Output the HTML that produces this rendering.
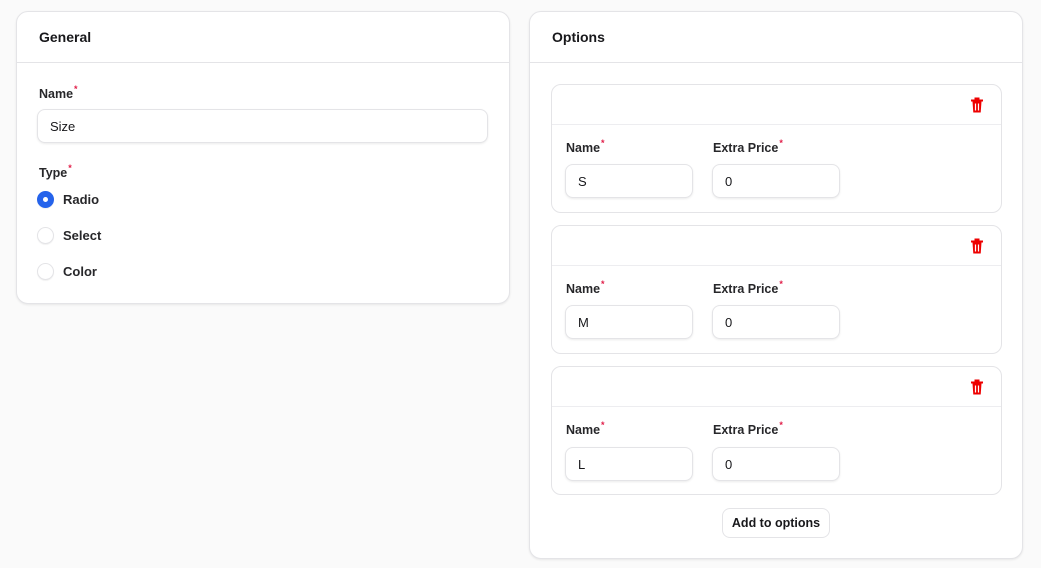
<!DOCTYPE html>
<html><head><meta charset="utf-8"><style>
*{box-sizing:border-box;margin:0;padding:0}
body{width:1041px;height:568px;background:#fafafa;font-family:"Liberation Sans",sans-serif;color:#18181b;position:relative;overflow:hidden}
.card{position:absolute;background:#fff;border:1px solid #e4e4e7;border-radius:12px;box-shadow:0 1px 2px rgba(0,0,0,.08)}
.hd{position:absolute;left:0;right:0;top:0;height:51px;border-bottom:1px solid #e4e4e7}
.ht{position:absolute;left:22px;top:17px;font-size:14px;font-weight:bold}
.lbl{position:absolute;font-size:12.5px;font-weight:bold;color:#27272a}
.lbl sup{color:#e11d48;font-size:9px;position:relative;top:-1px;margin-left:1px}
.inp{position:absolute;height:34px;border:1px solid #e4e4e7;border-radius:8px;box-shadow:0 1px 2px rgba(0,0,0,.08);font-size:13px;padding:9px 12px;background:#fff}
.rad{position:absolute;width:17px;height:17px;border-radius:50%;border:1px solid #e4e4e7;box-shadow:0 1px 1px rgba(0,0,0,.06);background:#fff}
.rad.on{background:#2563eb;border-color:#2563eb}
.rad.on:after{content:"";position:absolute;left:5px;top:5px;width:5px;height:5px;border-radius:50%;background:#fff}
.rt{position:absolute;font-size:13px;font-weight:bold;color:#27272a}
.opt{position:absolute;left:21px;width:451px;height:129px;border:1px solid #e4e4e7;border-radius:10px;background:#fff}
.opt .oh{position:absolute;left:0;right:0;top:0;height:40px;border-bottom:1px solid #ededf0}
.opt svg{position:absolute;left:418px;top:12px}
.btn{position:absolute;left:192px;top:496px;width:108px;height:30px;border:1px solid #e4e4e7;border-radius:8px;font-size:12.5px;font-weight:bold;text-align:center;line-height:28px;background:#fff}
</style></head><body>
<div class="card" style="left:16px;top:11px;width:494px;height:293px">
  <div class="hd"><div class="ht">General</div></div>
  <div class="lbl" style="left:22px;top:73px">Name<sup>*</sup></div>
  <div class="inp" style="left:20px;top:97px;width:451px">Size</div>
  <div class="lbl" style="left:22px;top:152px">Type<sup>*</sup></div>
  <div class="rad on" style="left:20px;top:179px"></div><div class="rt" style="left:46px;top:180px">Radio</div>
  <div class="rad" style="left:20px;top:215px"></div><div class="rt" style="left:46px;top:216px">Select</div>
  <div class="rad" style="left:20px;top:251px"></div><div class="rt" style="left:46px;top:252px">Color</div>
</div>
<div class="card" style="left:529px;top:11px;width:494px;height:548px">
  <div class="hd"><div class="ht">Options</div></div>
  <div class="opt" style="top:72px"><div class="oh"></div>
    <svg width="14" height="17" viewBox="0 0 14 17"><path d="M4.5 1.5h5M1 3.5h12" stroke="#e00" stroke-width="2" fill="none"/><path d="M2.5 4.5h9l-.8 11h-7.4z" fill="#e00"/><path d="M5.5 6.5v7M8.5 6.5v7" stroke="#fff" stroke-width="1.2"/></svg>
    <div class="lbl" style="left:14px;top:54px">Name<sup>*</sup></div>
    <div class="lbl" style="left:161px;top:54px">Extra Price<sup>*</sup></div>
    <div class="inp" style="left:13px;top:79px;width:128px">S</div>
    <div class="inp" style="left:160px;top:79px;width:128px">0</div>
  </div>
  <div class="opt" style="top:213px"><div class="oh"></div>
    <svg width="14" height="17" viewBox="0 0 14 17"><path d="M4.5 1.5h5M1 3.5h12" stroke="#e00" stroke-width="2" fill="none"/><path d="M2.5 4.5h9l-.8 11h-7.4z" fill="#e00"/><path d="M5.5 6.5v7M8.5 6.5v7" stroke="#fff" stroke-width="1.2"/></svg>
    <div class="lbl" style="left:14px;top:54px">Name<sup>*</sup></div>
    <div class="lbl" style="left:161px;top:54px">Extra Price<sup>*</sup></div>
    <div class="inp" style="left:13px;top:79px;width:128px">M</div>
    <div class="inp" style="left:160px;top:79px;width:128px">0</div>
  </div>
  <div class="opt" style="top:354px"><div class="oh"></div>
    <svg width="14" height="17" viewBox="0 0 14 17"><path d="M4.5 1.5h5M1 3.5h12" stroke="#e00" stroke-width="2" fill="none"/><path d="M2.5 4.5h9l-.8 11h-7.4z" fill="#e00"/><path d="M5.5 6.5v7M8.5 6.5v7" stroke="#fff" stroke-width="1.2"/></svg>
    <div class="lbl" style="left:14px;top:54px">Name<sup>*</sup></div>
    <div class="lbl" style="left:161px;top:54px">Extra Price<sup>*</sup></div>
    <div class="inp" style="left:13px;top:80px;width:128px">L</div>
    <div class="inp" style="left:160px;top:80px;width:128px">0</div>
  </div>
  <div class="btn">Add to options</div>
</div>
</body></html>
